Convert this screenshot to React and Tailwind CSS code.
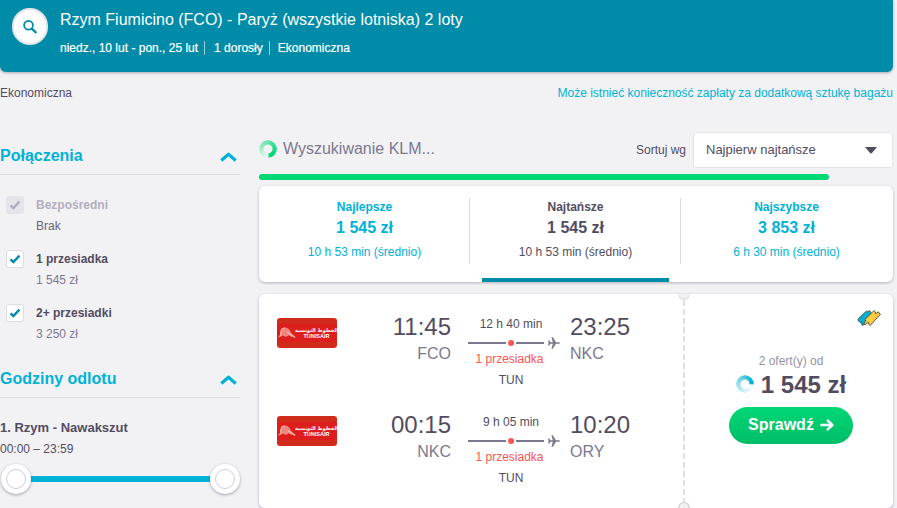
import React from 'react';

const stops = [
  { name: 'Bezpośredni', price: 'Brak', disabled: true },
  { name: '1 przesiadka', price: '1 545 zł' },
  { name: '2+ przesiadki', price: '3 250 zł' },
];

const tabs = [
  { name: 'Najlepsze', price: '1 545 zł', time: '10 h 53 min (średnio)' },
  { name: 'Najtańsze', price: '1 545 zł', time: '10 h 53 min (średnio)', active: true },
  { name: 'Najszybsze', price: '3 853 zł', time: '6 h 30 min (średnio)' },
];

const legs = [
  { from: 'FCO', departs: '11:45', to: 'NKC', arrives: '23:25', duration: '12 h 40 min' },
  { from: 'NKC', departs: '00:15', to: 'ORY', arrives: '10:20', duration: '9 h 05 min' },
];

const Header = () => (
  <header className="flex h-[72px] w-[893px] gap-3 rounded-b-md bg-[#008ca8] pl-3 pt-2 text-white shadow-[0_1px_3px_rgba(82,76,97,0.45)]">
    <button className="flex h-[37px] w-9 items-center justify-center rounded-full border-2 border-[#e6e4eb] bg-white">
      <svg className="shrink-0" width="16" height="16" viewBox="0 0 16 16" fill="none" stroke="#008ca8">
        <circle cx="6.5" cy="6.2" r="4.4" strokeWidth="1.8" />
        <path d="M9.6 9.3 14.4 14" strokeWidth="2.4" />
      </svg>
    </button>
    <div>
      <h1 className="text-base leading-[24px]">Rzym Fiumicino (FCO) - Paryż (wszystkie lotniska) 2 loty</h1>
      <div className="mt-[9px] flex text-xs leading-[14px] [-webkit-text-stroke:0.2px_white]">
        <span className="border-r border-white/60 pr-[6px]">niedz., 10 lut - pon., 25 lut</span>
        <span className="border-r border-white/60 pl-[9px] pr-[6px]">1 dorosły</span>
        <span className="pl-[8px]">Ekonomiczna</span>
      </div>
    </div>
  </header>
);

const FilterTitle = ({ children }) => (
  <div className="flex h-[38px] items-center justify-between border-b border-[#dddbe2] pr-[3px]">
    <h2 className="text-base font-bold text-[#00b2d6]">{children}</h2>
    <svg className="mt-[3px]" width="17" height="10" viewBox="0 0 17 10" fill="none" stroke="#00b2d6" strokeWidth="3.2">
      <path d="M1.3 8.5 8.5 2.2l7.2 6.3" strokeLinejoin="round" />
    </svg>
  </div>
);

const StopFilter = ({ stop }) => (
  <div className="flex h-[54px] pl-1.5">
    <div
      className={
        stop.disabled
          ? 'flex h-[18px] w-[18px] items-center justify-center rounded-[3px] bg-[#e6e4eb]'
          : 'flex h-[18px] w-[18px] items-center justify-center rounded-[3px] border border-[#dddbe6] bg-white'
      }
    >
      <svg width="12" height="10" viewBox="0 0 12 10" fill="none" stroke={stop.disabled ? '#b2aebd' : '#008ca8'} strokeWidth="2.4">
        <path d="M1.5 5.3 4.4 8l6-6.3" />
      </svg>
    </div>
    <div className="ml-3 text-xs">
      <div className={stop.disabled ? 'font-bold leading-[18px] text-[#b2aebd]' : 'font-bold leading-[18px] text-[#524c61]'}>
        {stop.name}
      </div>
      <div className={stop.disabled ? 'mt-[3px] leading-[18px] text-[#68647a]' : 'mt-[3px] leading-[18px] text-[#7c788f]'}>
        {stop.price}
      </div>
    </div>
  </div>
);

const Knob = () => (
  <div className="z-10 flex h-[30px] w-[30px] items-center justify-center rounded-full bg-white shadow-[0_1px_3px_rgba(82,76,97,0.5)]">
    <div className="h-5 w-5 rounded-full border border-[#cdcbd8]" />
  </div>
);

const Sidebar = () => (
  <aside className="w-[240px] pt-[35px]">
    <FilterTitle>Połączenia</FilterTitle>
    <div className="pt-[21px]">
      {stops.map((stop) => (
        <StopFilter key={stop.name} stop={stop} />
      ))}
    </div>
    <div className="mt-[2px]">
      <FilterTitle>Godziny odlotu</FilterTitle>
    </div>
    <div className="mt-[21px] text-[13px] font-bold leading-[18px] text-[#524c61]">1. Rzym - Nawakszut</div>
    <div className="mt-[3px] text-xs leading-[18px] text-[#524c61]">00:00 – 23:59</div>
    <div className="mt-[6px] flex items-center pl-px">
      <Knob />
      <div className="-mx-1 h-1.5 flex-1 bg-[#00b2d6]" />
      <Knob />
    </div>
  </aside>
);

const SearchBar = () => (
  <div className="flex h-9 items-center text-[#524c61]">
    <div className="-mt-[2px] h-[18px] w-[18px] rounded-full bg-[conic-gradient(from_165deg,#00d775_0deg,#f1f2f8_20deg,#b5eed3_90deg,#00d775_330deg)] [mask-image:radial-gradient(circle,transparent_4px,black_5px)]" />
    <span className="-mt-[3px] ml-1.5 text-base text-[#7c788f]">Wyszukiwanie KLM...</span>
    <span className="ml-auto text-xs">Sortuj wg</span>
    <button className="ml-[7px] flex h-9 w-[200px] items-center justify-between rounded-[3px] border border-[#e3e1ea] bg-white pl-3 pr-[15px] text-[13px]">
      Najpierw najtańsze
      <svg width="12" height="7" viewBox="0 0 12 7" fill="#524c61">
        <path d="M0 0h12L7.2 5.7a1.6 1.6 0 0 1-2.4 0z" />
      </svg>
    </button>
  </div>
);

const Tabs = () => (
  <div className="mt-1.5 flex h-24 rounded-md bg-white shadow-[0_1px_3px_rgba(82,76,97,0.4)]">
    {tabs.map((tab) => (
      <div
        key={tab.name}
        className={
          tab.active
            ? 'flex w-[211px] flex-col items-center justify-between pt-3 text-[#524c61]'
            : 'flex w-[211px] flex-col items-center justify-between pt-3 text-[#00b2d6]'
        }
      >
        <div
          className={
            tab.active
              ? '-ml-px h-[66px] w-[212px] border-x border-[#dddbe2] pl-px text-center'
              : 'h-[66px] w-[211px] text-center'
          }
        >
          <div className="text-xs font-bold leading-[18px]">{tab.name}</div>
          <div className="mt-[1px] text-base font-bold leading-[22px]">{tab.price}</div>
          <div className="mt-1 text-xs leading-[18px]">{tab.time}</div>
        </div>
        {tab.active && <div className="h-1 w-[187px] bg-[#008ca8]" />}
      </div>
    ))}
  </div>
);

const AirlineLogo = () => (
  <div className="flex h-[30px] w-[60px] items-center rounded-[3px] bg-[#d12c1b]">
    <div className="flex h-[18px] w-full items-center bg-[#dc1f1c] text-white">
      <svg className="ml-px shrink-0" width="19" height="12" viewBox="0 0 19 12">
        <path d="M3.5 1.2C7 0 10.5.6 11.8 3.6c.8 2 2.8 4.3 6.4 6.9-3.4-.2-5.6-.8-7.6-2.2L8 10 4.8 8.5 1.500 10.600z" fill="#ee867c" />
        <path d="M.6 10.3 3 7.500C1.800 4.500 3.500 1.500 6.500 1M9.500 5.500l7.500 4.800" fill="none" stroke="#fbdcd8" strokeWidth=".8" />
      </svg>
      <div className="-mt-px flex w-[39px] flex-col items-center leading-none">
        <span dir="rtl" className="h-[6px] whitespace-nowrap font-['DejaVu_Sans',sans-serif] text-[5px] font-bold leading-[6px]">الخطوط التونسية</span>
        <span className="h-[6px] text-[5.5px] font-bold leading-[6px]">TUNISAIR</span>
      </div>
    </div>
  </div>
);

const Leg = ({ leg }) => (
  <div className="flex h-[98px] pl-[18px]">
    <div className="pt-[5px]">
      <AirlineLogo />
    </div>
    <div className="w-[114px] text-right">
      <div className="text-2xl leading-[28px] text-[#524c61]">{leg.departs}</div>
      <div className="mt-px text-base leading-[24px] text-[#7c788f]">{leg.from}</div>
    </div>
    <div className="ml-[17px] w-[94px]">
      <div className="w-[86px] text-center text-xs leading-[22px] text-[#524c61]">{leg.duration}</div>
      <div className="mt-[1px] flex h-[14px] items-center">
        <div className="h-0.5 w-[38px] bg-[#7c788f]" />
        <div className="mx-[2px] h-1.5 w-1.5 rounded-full bg-[#ff5452]" />
        <div className="h-0.5 w-[28px] bg-[#7c788f]" />
        <svg className="ml-1" width="12" height="12" viewBox="0 0 12 12" fill="#7c788f">
          <path d="M0 3.5h1.2L2.5 5.2h2.3L3.5.2h1.4l3 5h2.6c.9 0 1.5.3 1.5.8s-.6.8-1.500.8H7.900l-3 5H3.500l1.300-5H2.500L1.200 8.500H0L.6 6z" />
        </svg>
      </div>
      <div className="w-[83px] text-center text-xs leading-[18px] text-[#ff5452]">1 przesiadka</div>
      <div className="mt-[3px] w-[86px] text-center text-xs leading-[18px] text-[#524c61]">TUN</div>
    </div>
    <div className="ml-2">
      <div className="text-2xl leading-[28px] text-[#524c61]">{leg.arrives}</div>
      <div className="mt-px text-base leading-[24px] text-[#7c788f]">{leg.to}</div>
    </div>
  </div>
);

const TicketIcon = () => (
  <svg className="absolute right-[12px] top-[15px]" width="24" height="18" viewBox="0 0 24 18" strokeWidth=".9" stroke="#4a4a42" strokeLinejoin="round">
    <path d="M1.5 9.5 9.5 2 11 3.200 12.300 1.500 14 3.500 8 15l-2.500 1.500-1-1.500.3-1.800-1.600.2L1 11.500z" fill="#00b2d6" />
    <path d="M8 10.500 17 1.500l1.500 1.400-.2 1.500 1.700-.2 1.200-1.500 2.200 2.900-1.700 1.400L13.200 16.500l-1.700-1.300.2-1.700-1.700.5-1.700 2L6.800 14l1.900-1.600z" fill="#fecb3f" />
  </svg>
);

const Ticket = () => (
  <div className="relative mt-3 flex h-[214px] rounded-md bg-white shadow-[0_1px_3px_rgba(82,76,97,0.4)]">
    <div className="w-[424px] pt-[19px]">
      {legs.map((leg) => (
        <Leg key={leg.departs} leg={leg} />
      ))}
    </div>
    <svg className="shrink-0" width="2" height="214">
      <path d="M1 6v202" stroke="#e0dfe7" strokeWidth="2" strokeDasharray="6 3" />
    </svg>
    <div className="absolute left-[419px] top-0 h-1.5 w-3 rounded-b-full border border-t-0 border-[#dddbe2] bg-[#f2f2f5]" />
    <div className="absolute bottom-0 left-[419px] h-1.5 w-3 rounded-t-full border border-b-0 border-[#c9c8ce] bg-[#f2f2f5]" />
    <div className="flex flex-1 flex-col items-center pl-1 pt-[58px]">
      <div className="text-xs leading-[18px] text-[#9794a6]">2 ofert(y) od</div>
      <div className="flex h-[30px] items-center gap-[7px]">
        <div className="-mt-[2px] h-[18px] w-[18px] rounded-full bg-[conic-gradient(from_85deg,#00b2d6_0deg,#ffffff_15deg,#d9f3f9_90deg,#8fdcec_200deg,#00b2d6_350deg)] [mask-image:radial-gradient(circle,transparent_4px,black_5px)]" />
        <span className="text-2xl font-bold text-[#524c61]">1 545 zł</span>
      </div>
      <button className="mt-[7px] flex h-[37px] w-[124px] items-center justify-center gap-1.5 rounded-full bg-linear-to-b from-[#00d775] to-[#00bd68] pb-px text-base font-bold text-white">
        Sprawdź
        <svg width="14" height="12" viewBox="0 0 14 12" fill="none" stroke="white" strokeWidth="2.6" strokeLinecap="round" strokeLinejoin="round">
          <path d="M1.5 6H12M7.8 1.600 12.300 6l-4.500 4.400" />
        </svg>
      </button>
    </div>
    <TicketIcon />
  </div>
);

const App = () => (
  <div className="h-[508px] w-[897px] overflow-hidden bg-[#f2f2f5] font-['Liberation_Sans',Arial,sans-serif]">
    <Header />
    <div className="mt-3 flex h-[18px] w-[893px] items-center justify-between text-xs">
      <span className="text-[#524c61]">Ekonomiczna</span>
      <a className="text-[#00b2d6]">Może istnieć konieczność zapłaty za dodatkową sztukę bagażu</a>
    </div>
    <div className="flex w-[893px] justify-between">
      <Sidebar />
      <main className="w-[634px] pt-[30px]">
        <SearchBar />
        <div className="mt-1.5 h-1.5 w-[570px] rounded-full bg-[#00d775]" />
        <Tabs />
        <Ticket />
      </main>
    </div>
  </div>
);

export default App;
